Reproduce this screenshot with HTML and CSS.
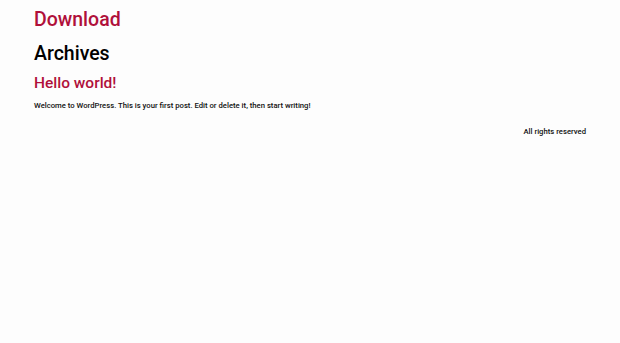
FILE: index.html
```html
<!DOCTYPE html>
<html lang="en">
<head>
  <meta charset="UTF-8" />
  <title>Archives – Download</title>
  <link rel="stylesheet" href="styles.css">
</head>
<body>
  <header class="site-header">
    <p class="site-title"><a href="#">Download</a></p>
  </header>

  <main class="site-main">
    <h1 class="page-title">Archives</h1>
    <article class="post">
      <h2 class="entry-title"><a href="#">Hello world!</a></h2>
      <p>Welcome to WordPress. This is your first post. Edit or delete it, then start writing!</p>
    </article>
  </main>

  <footer class="site-footer">
    <p>All rights reserved</p>
  </footer>
</body>
</html>
```

FILE: styles.css
```css
:root{
  --link:#b0103a;
  --text:#111;
}

* { box-sizing: border-box; }
body{
  margin:0; background:#fdfdfd; color:var(--text);
  font-family: Roboto, "Liberation Sans", Arial, sans-serif;
  padding: 0 34px;
}
a{ color:var(--link); text-decoration:none; }

.site-header{ padding-top: 8px; }
.site-title{ margin:0; font-size:19.5px; font-weight:500; line-height:24px; }

.page-title{ margin:10px 0 0; font-size:19.5px; font-weight:500; line-height:24px; color:#000; }

.entry-title{ margin:7px 0 0; font-size:15.5px; font-weight:500; line-height:20px; }
.post p{ margin:7px 0 0; font-size:7.7px; font-weight:500; line-height:11px; }

.site-footer{ display:flex; justify-content:flex-end; padding-top:15px; }
.site-footer p{ margin:0; font-size:7.7px; font-weight:500; line-height:11px; }
```
